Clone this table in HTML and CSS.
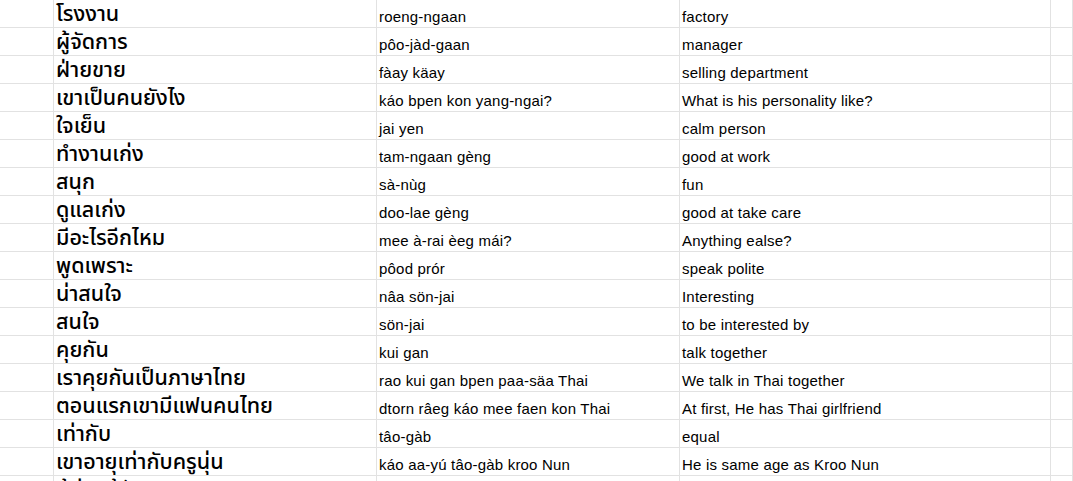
FILE: index.html
```html
<!DOCTYPE html>
<html lang="th">
<head>
<meta charset="utf-8">
<title>Sheet</title>
<link rel="stylesheet" href="styles.css">
</head>
<body>
<div class="sheet">
  <div class="row"><div class="c g"></div><div class="c th">โรงงาน</div><div class="c en">roeng-ngaan</div><div class="c en">factory</div><div class="c"></div></div>
  <div class="row"><div class="c g"></div><div class="c th">ผู้จัดการ</div><div class="c en">pôo-jàd-gaan</div><div class="c en">manager</div><div class="c"></div></div>
  <div class="row"><div class="c g"></div><div class="c th">ฝ่ายขาย</div><div class="c en">fàay käay</div><div class="c en">selling department</div><div class="c"></div></div>
  <div class="row"><div class="c g"></div><div class="c th">เขาเป็นคนยังไง</div><div class="c en">káo bpen kon yang-ngai?</div><div class="c en">What is his personality like?</div><div class="c"></div></div>
  <div class="row"><div class="c g"></div><div class="c th">ใจเย็น</div><div class="c en">jai yen</div><div class="c en">calm person</div><div class="c"></div></div>
  <div class="row"><div class="c g"></div><div class="c th">ทำงานเก่ง</div><div class="c en">tam-ngaan gèng</div><div class="c en">good at work</div><div class="c"></div></div>
  <div class="row"><div class="c g"></div><div class="c th">สนุก</div><div class="c en">sà-nùg</div><div class="c en">fun</div><div class="c"></div></div>
  <div class="row"><div class="c g"></div><div class="c th">ดูแลเก่ง</div><div class="c en">doo-lae gèng</div><div class="c en">good at take care</div><div class="c"></div></div>
  <div class="row"><div class="c g"></div><div class="c th">มีอะไรอีกไหม</div><div class="c en">mee à-rai èeg mái?</div><div class="c en">Anything ealse?</div><div class="c"></div></div>
  <div class="row"><div class="c g"></div><div class="c th">พูดเพราะ</div><div class="c en">pôod prór</div><div class="c en">speak polite</div><div class="c"></div></div>
  <div class="row"><div class="c g"></div><div class="c th">น่าสนใจ</div><div class="c en">nâa sön-jai</div><div class="c en">Interesting</div><div class="c"></div></div>
  <div class="row"><div class="c g"></div><div class="c th">สนใจ</div><div class="c en">sön-jai</div><div class="c en">to be interested by</div><div class="c"></div></div>
  <div class="row"><div class="c g"></div><div class="c th">คุยกัน</div><div class="c en">kui gan</div><div class="c en">talk together</div><div class="c"></div></div>
  <div class="row"><div class="c g"></div><div class="c th">เราคุยกันเป็นภาษาไทย</div><div class="c en">rao kui gan bpen paa-säa Thai</div><div class="c en">We talk in Thai together</div><div class="c"></div></div>
  <div class="row"><div class="c g"></div><div class="c th">ตอนแรกเขามีแฟนคนไทย</div><div class="c en">dtorn râeg káo mee faen kon Thai</div><div class="c en">At first, He has Thai girlfriend</div><div class="c"></div></div>
  <div class="row"><div class="c g"></div><div class="c th">เท่ากับ</div><div class="c en">tâo-gàb</div><div class="c en">equal</div><div class="c"></div></div>
  <div class="row"><div class="c g"></div><div class="c th">เขาอายุเท่ากับครูนุ่น</div><div class="c en">káo aa-yú tâo-gàb kroo Nun</div><div class="c en">He is same age as Kroo Nun</div><div class="c"></div></div>
  <div class="row"><div class="c g"></div><div class="c th">ผู้ช่วยผู้จัดการ</div><div class="c en"></div><div class="c en"></div><div class="c"></div></div>
</div>
</body>
</html>
```
FILE: styles.css
```css
html, body {
  margin: 0;
  padding: 0;
  background: #ffffff;
  overflow: hidden;
}
.sheet {
  display: flex;
  flex-direction: column;
}
.row {
  display: grid;
  grid-template-columns: 54px 323px 303px 371px 1fr;
  height: 28px;
}
.c {
  box-sizing: border-box;
  border-right: 1px solid #e2e2e2;
  border-bottom: 1px solid #e2e2e2;
  white-space: nowrap;
  color: #000;
}
.en {
  font-family: "Liberation Sans", Arial, sans-serif;
  font-size: 15px;
  letter-spacing: 0.2px;
  line-height: 20px;
  padding: 7px 0 0 2px;
}
.th {
  font-family: "Thonburi", "Noto Sans Thai", "Noto Sans", sans-serif;
  font-size: 21.5px;
  font-weight: 500;
  line-height: 23px;
  padding: 3px 0 0 2px;
}
```
